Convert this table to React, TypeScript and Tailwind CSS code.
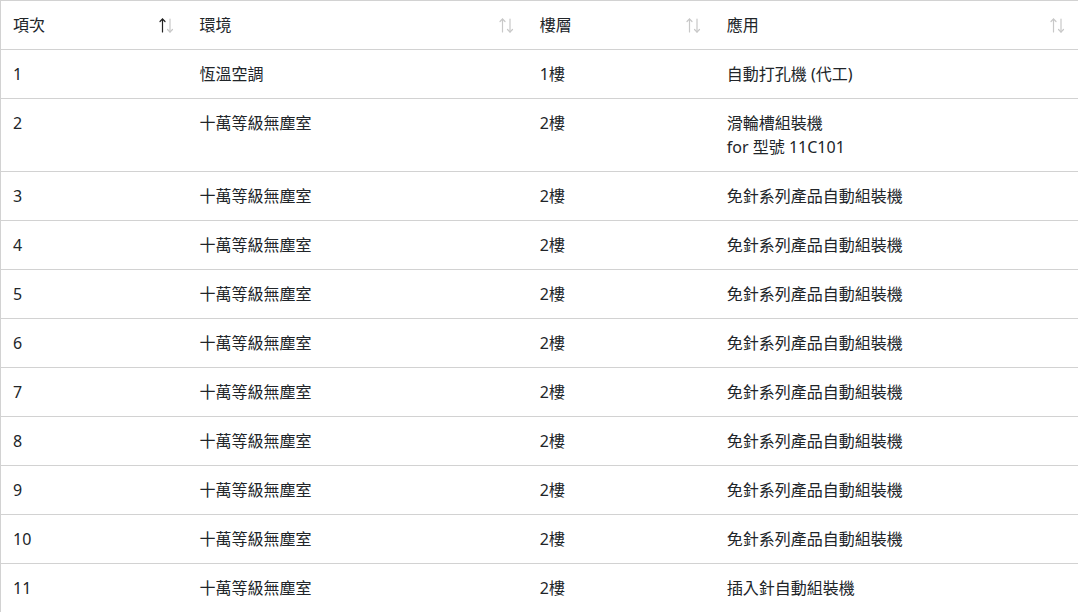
import React from 'react';

type Row = { no: string; env: string; floor: string; app: string[] };

const rows: Row[] = [
  { no: '1', env: '恆溫空調', floor: '1樓', app: ['自動打孔機 (代工)'] },
  { no: '2', env: '十萬等級無塵室', floor: '2樓', app: ['滑輪槽組裝機', 'for 型號 11C101'] },
  { no: '3', env: '十萬等級無塵室', floor: '2樓', app: ['免針系列產品自動組裝機'] },
  { no: '4', env: '十萬等級無塵室', floor: '2樓', app: ['免針系列產品自動組裝機'] },
  { no: '5', env: '十萬等級無塵室', floor: '2樓', app: ['免針系列產品自動組裝機'] },
  { no: '6', env: '十萬等級無塵室', floor: '2樓', app: ['免針系列產品自動組裝機'] },
  { no: '7', env: '十萬等級無塵室', floor: '2樓', app: ['免針系列產品自動組裝機'] },
  { no: '8', env: '十萬等級無塵室', floor: '2樓', app: ['免針系列產品自動組裝機'] },
  { no: '9', env: '十萬等級無塵室', floor: '2樓', app: ['免針系列產品自動組裝機'] },
  { no: '10', env: '十萬等級無塵室', floor: '2樓', app: ['免針系列產品自動組裝機'] },
  { no: '11', env: '十萬等級無塵室', floor: '2樓', app: ['插入針自動組裝機'] },
];

// sort indicator: up + down arrows, active one darker
const SortIcon = ({ active }: { active?: 'asc' | 'desc' }) => (
  <svg width="15" height="15" viewBox="0 0 15 15" className="shrink-0 mr-[2px]">
    <g fill="none" strokeWidth="1.2" strokeLinecap="round" strokeLinejoin="round">
      <g stroke={active === 'asc' ? '#222' : '#c8c8c8'}>
        <path d="M3.5 14V1" />
        <path d="M1 3.5L3.5 1L6 3.5" />
      </g>
      <g stroke={active === 'desc' ? '#222' : '#c8c8c8'}>
        <path d="M11 1V14" />
        <path d="M8.5 11.5L11 14L13.5 11.5" />
      </g>
    </g>
  </svg>
);

const headers: { label: string; w: string; active?: 'asc' | 'desc' }[] = [
  { label: '項次', w: 'w-[187px]', active: 'asc' },
  { label: '環境', w: 'w-[340px]' },
  { label: '樓層', w: 'w-[187px]' },
  { label: '應用', w: 'w-[364px]' },
];

export default function App() {
  return (
    <div
      className="min-h-screen bg-white text-[#212529] overflow-hidden"
      style={{ fontFamily: '"Noto Sans", "Noto Sans CJK TC", sans-serif' }}
    >
      <table className="w-[1079px] table-fixed border-collapse border-t border-l border-[#d2d2d2] text-[16px] leading-6">
        <thead>
          <tr className="border-b border-[#d2d2d2]">
            {headers.map(h => (
              <th key={h.label} className={`${h.w} px-3 py-3 text-left font-normal`}>
                <div className="flex items-center justify-between">
                  <span>{h.label}</span>
                  <SortIcon active={h.active} />
                </div>
              </th>
            ))}
          </tr>
        </thead>
        <tbody>
          {rows.map(r => (
            <tr key={r.no} className="border-b border-[#d2d2d2] align-top">
              <td className="px-3 py-3">{r.no}</td>
              <td className="px-3 py-3">{r.env}</td>
              <td className="px-3 py-3">{r.floor}</td>
              <td className="px-3 py-3">
                {r.app.map(line => (
                  <div key={line}>{line}</div>
                ))}
              </td>
            </tr>
          ))}
        </tbody>
      </table>
    </div>
  );
}
